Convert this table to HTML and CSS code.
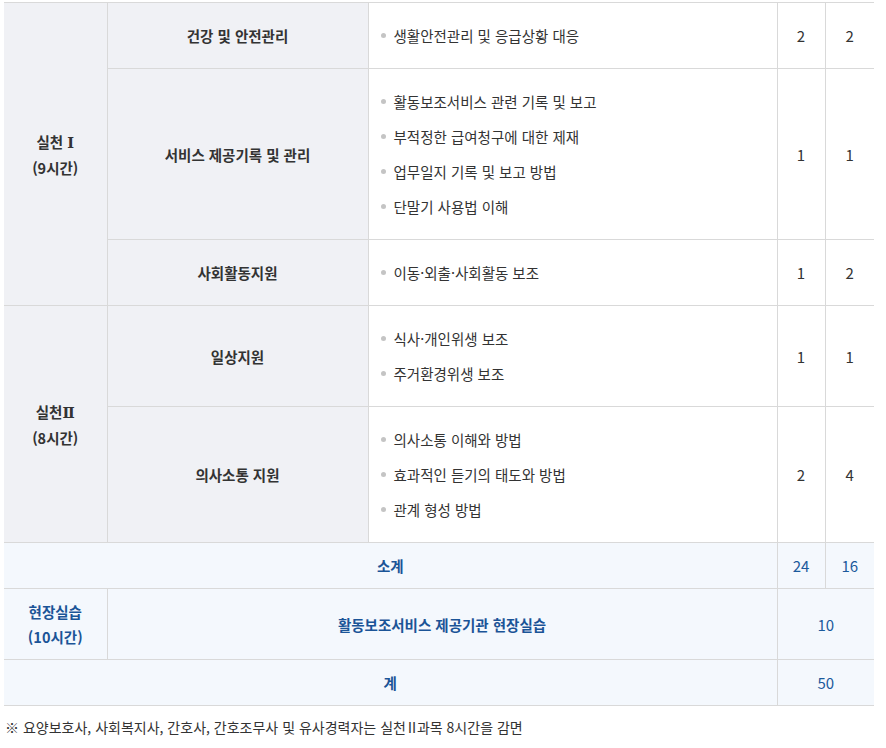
FILE: index.html
```html
<!DOCTYPE html>
<html lang="ko">
<head>
<meta charset="utf-8">
<title>교육과정</title>
<link rel="stylesheet" href="styles.css">
</head>
<body>
<div class="wrap">
<table class="curri">
  <colgroup>
    <col class="c1"><col class="c2"><col class="c3"><col class="c4"><col class="c5">
  </colgroup>
  <tbody>
    <tr>
      <th class="grp" rowspan="3">실천 <span class="roman">Ⅰ</span><br>(9시간)</th>
      <th class="sub">건강 및 안전관리</th>
      <td class="items"><ul><li>생활안전관리 및 응급상황 대응</li></ul></td>
      <td class="num">2</td>
      <td class="num">2</td>
    </tr>
    <tr>
      <th class="sub">서비스 제공기록 및 관리</th>
      <td class="items"><ul>
        <li>활동보조서비스 관련 기록 및 보고</li>
        <li>부적정한 급여청구에 대한 제재</li>
        <li>업무일지 기록 및 보고 방법</li>
        <li>단말기 사용법 이해</li>
      </ul></td>
      <td class="num">1</td>
      <td class="num">1</td>
    </tr>
    <tr>
      <th class="sub">사회활동지원</th>
      <td class="items"><ul><li>이동·외출·사회활동 보조</li></ul></td>
      <td class="num">1</td>
      <td class="num">2</td>
    </tr>
    <tr>
      <th class="grp" rowspan="2">실천<span class="roman">Ⅱ</span><br>(8시간)</th>
      <th class="sub">일상지원</th>
      <td class="items"><ul>
        <li>식사·개인위생 보조</li>
        <li>주거환경위생 보조</li>
      </ul></td>
      <td class="num">1</td>
      <td class="num">1</td>
    </tr>
    <tr>
      <th class="sub">의사소통 지원</th>
      <td class="items"><ul>
        <li>의사소통 이해와 방법</li>
        <li>효과적인 듣기의 태도와 방법</li>
        <li>관계 형성 방법</li>
      </ul></td>
      <td class="num">2</td>
      <td class="num">4</td>
    </tr>
    <tr class="sum">
      <th colspan="3">소계</th>
      <td class="num">24</td>
      <td class="num">16</td>
    </tr>
    <tr class="sum">
      <th class="grp">현장실습<br>(10시간)</th>
      <th colspan="2">활동보조서비스 제공기관 현장실습</th>
      <td class="num" colspan="2">10</td>
    </tr>
    <tr class="sum">
      <th colspan="3">계</th>
      <td class="num" colspan="2">50</td>
    </tr>
  </tbody>
</table>
<p class="note">※ 요양보호사, 사회복지사, 간호사, 간호조무사 및 유사경력자는 실천<span class="roman">Ⅱ</span>과목 8시간을 감면</p>
</div>
</body>
</html>
```

FILE: styles.css
```css
html, body {
  margin: 0;
  padding: 0;
  background: #fff;
}
body {
  font-family: "Noto Sans CJK KR", "Noto Sans", sans-serif;
  color: #333;
  font-size: 14.5px;
}
.wrap {
  padding: 2px 12px 0 4px;
}
.curri {
  width: 870px;
  border-collapse: collapse;
  table-layout: fixed;
  border-top: 1px solid #d9d9d9;
}
.c1 { width: 103px; }
.c2 { width: 261px; }
.c3 { width: 409px; }
.c4 { width: 48px; }
.c5 { width: 49px; }
.curri th, .curri td {
  border: 1px solid #d9d9d9;
  padding: 10px 0;
  line-height: 25px;
  text-align: center;
  vertical-align: middle;
}
.curri tr > :first-child { border-left: none; }
.curri tr > :last-child { border-right: none; }
.curri th {
  background: #f0f1f5;
  font-weight: 700;
  color: #333;
}
.roman {
  font-family: "DejaVu Serif", "Liberation Serif", serif;
}
.curri td.items {
  text-align: left;
  padding: 15px 12px;
  background: #fff;
}
.items ul {
  list-style: none;
  margin: 0;
  padding: 0;
}
.items li {
  line-height: 35px;
  display: flex;
  align-items: center;
  gap: 8px;
}
.items li::before {
  content: "";
  width: 5px;
  height: 5px;
  border-radius: 50%;
  background: #c4c4c4;
  flex: none;
}
.curri td.num {
  background: #fff;
  font-size: 15px;
}
.curri tr > .grp { border-left: none; }
.curri .sum th, .curri .sum td {
  background: #f4f8fd;
  color: #1b5a9c;
}
.curri .sum th { color: #1b5497; }
.note {
  margin: 10px 0 0 1px;
  font-size: 14px;
  line-height: 22px;
  color: #333;
}
.note .roman {
  font-family: "Noto Sans CJK KR", sans-serif;
  letter-spacing: -2px;
  margin-left: -1px;
}
```
